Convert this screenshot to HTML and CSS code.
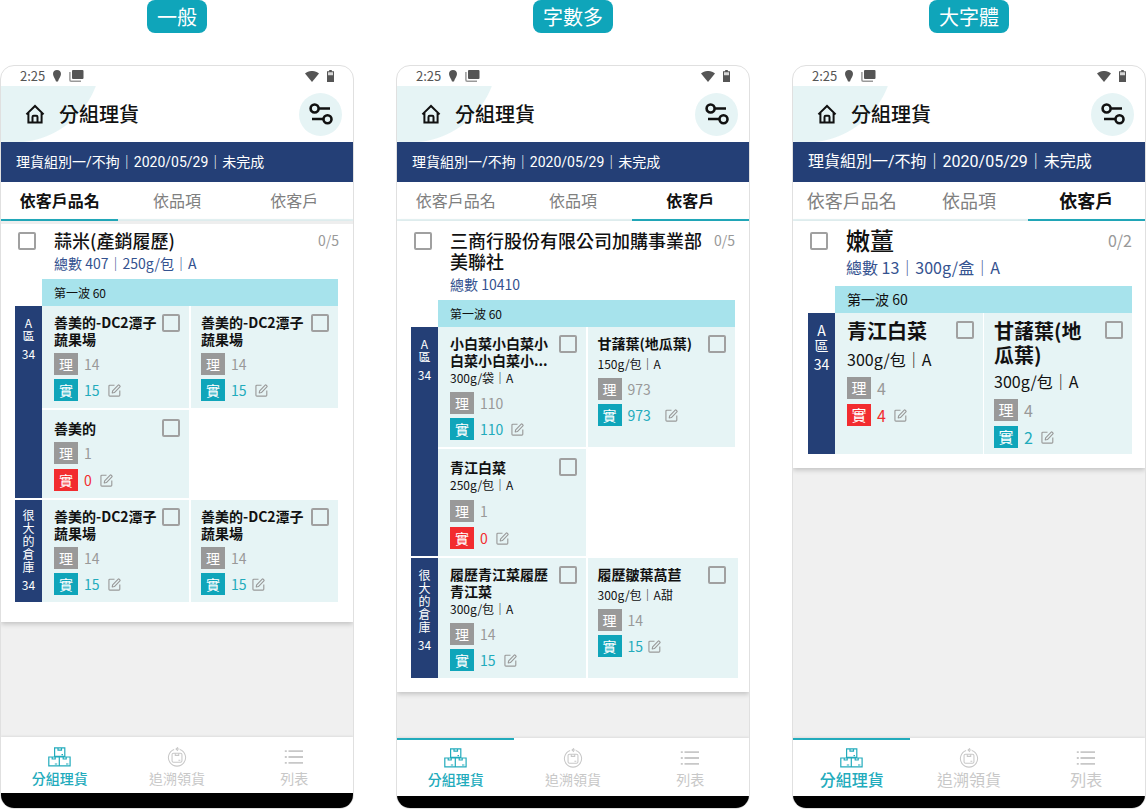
FILE: index.html
```html
<!DOCTYPE html>
<html lang="zh-Hant">
<head>
<meta charset="utf-8">
<meta name="viewport" content="width=device-width, initial-scale=1">
<title>分組理貨</title>
<link rel="stylesheet" href="styles.css">
</head>
<body>
<svg class="sprite" aria-hidden="true">
  <symbol id="i-pin" viewBox="0 0 8 12"><path d="M4 0C1.700 0 0 1.700 0 3.900 0 6.500 2.400 8.500 3 11.600h2C5.600 8.500 8 6.500 8 3.900 8 1.700 6.300 0 4 0z" fill="currentColor"/></symbol>
  <symbol id="i-cards" viewBox="0 0 15 12"><rect x="3" y="0" width="11.500" height="9" rx="1" fill="currentColor"/><path d="M.9 2v8q0 1.200 1.200 1.200H12" fill="none" stroke="#999" stroke-width="1.500"/></symbol>
  <symbol id="i-wifi" viewBox="0 0 14 11"><path d="M0 2.600C4-.9 10-.9 14 2.600L7 11z" fill="currentColor"/></symbol>
  <symbol id="i-battery" viewBox="0 0 7 12"><path d="M2.200 0h2.600v1.200H7V12H0V1.200h2.200z" fill="currentColor"/><path d="M1 2.200h5v3H1z" fill="#d8d8d8"/></symbol>
  <symbol id="i-home" viewBox="0 0 20 20"><path d="M1.400 10.400 10 2l8.600 8.400M3.400 8.800v9.700h13.200V8.800M7.500 18.300v-5.400q0-1.200 1.200-1.200h2.600q1.200 0 1.200 1.200v5.400" fill="none" stroke="currentColor" stroke-width="2"/></symbol>
  <symbol id="i-filter" viewBox="0 0 24 22"><g fill="none" stroke="currentColor" stroke-width="2.600"><circle cx="5.600" cy="5.500" r="4"/><path d="M9.600 5.500H21M3 16h11.500"/><circle cx="18.500" cy="16.200" r="4"/></g></symbol>
  <symbol id="i-edit" viewBox="0 0 14 14"><g fill="none" stroke="currentColor" stroke-width="1.200" stroke-linejoin="round"><path d="M7 1.300H2Q1 1.300 1 2.300V12q0 1 1 1h9.700q1 0 1-1V7"/><path d="M4.500 9.700 5 7.300 11 1.200q.5-.5 1 0l.8.8q.5.500 0 1L6.900 9.200z"/></g></symbol>
  <symbol id="i-boxes" viewBox="0 0 23 20"><g fill="none" stroke="currentColor" stroke-width="1.200"><path d="M6.600.9h10.200v8.500H6.600zM.8 10h10.500v8.800H.8zM11.300 10h10.800v8.800H11.300z"/><path d="M10 .9v2.300h3.500V.9M4.200 10v2h3v-2M15.200 10v2h3v-2M6.800 17h2.400M18 17h2.400M13.500 7.600H15"/></g></symbol>
  <symbol id="i-trace" viewBox="0 0 20 21"><g fill="none" stroke="currentColor" stroke-width="1.100"><path d="M7 2.600A9 9 0 1 0 13 2.600"/><path d="M9 2.200h3.500M11 .3 9 2.200l2 1.900"/><rect x="4.800" y="6.500" width="10.400" height="9.500" rx="1.500"/><path d="M8.200 6.500v2.300h3.600V6.500M11.500 14h2"/></g></symbol>
  <symbol id="i-list" viewBox="0 0 20 16"><path d="M4.500 2.200H19M4.500 8H19M4.500 13.800H19M.8 2.200h2M.8 8h2M.8 13.800h2" fill="none" stroke="currentColor" stroke-width="1.800"/></symbol>
</svg>

<main class="board">

  <section class="variant">
    <h2 class="tag">一般</h2>
    <div class="phone">
      <div class="status"><span>2:25</span><svg class="s-pin"><use href="#i-pin"/></svg><svg class="s-cards"><use href="#i-cards"/></svg><svg class="s-wifi"><use href="#i-wifi"/></svg><svg class="s-battery"><use href="#i-battery"/></svg></div>
      <header class="appbar">
        <button class="home" aria-label="首頁"><svg><use href="#i-home"/></svg></button>
        <h1 class="appbar-title">分組理貨</h1>
        <button class="filter" aria-label="篩選"><svg><use href="#i-filter"/></svg></button>
      </header>
      <p class="info">理貨組別一/不拘｜2020/05/29｜未完成</p>
      <div class="tabs" role="tablist">
        <button class="tab is-active" role="tab" aria-selected="true">依客戶品名</button>
        <button class="tab" role="tab">依品項</button>
        <button class="tab" role="tab">依客戶</button>
      </div>
      <div class="content">
        <article class="card card--first">
          <div class="card-head">
            <input type="checkbox" class="check" aria-label="蒜米(產銷履歷)">
            <div class="card-text"><h3 class="card-title">蒜米(產銷履歷)</h3><p class="card-sub">總數 407｜250g/包｜A</p></div>
            <span class="count">0/5</span>
          </div>
          <p class="wave">第一波 60</p>
          <div class="zones">
            <div class="zone">
              <div class="zone-label"><span class="zone-name">A區</span><span>34</span></div>
              <div class="cells">
                <div class="cell">
                  <div class="cell-head"><h4 class="name">善美的-DC2潭子蔬果場</h4><input type="checkbox" class="check" aria-label="善美的-DC2潭子蔬果場"></div>
                  <div class="metrics">
                    <div class="metric"><span class="badge">理</span><span>14</span></div>
                    <div class="metric metric--ok"><span class="badge">實</span><span>15</span><button class="edit" aria-label="編輯"><svg><use href="#i-edit"/></svg></button></div>
                  </div>
                </div>
                <div class="cell">
                  <div class="cell-head"><h4 class="name">善美的-DC2潭子蔬果場</h4><input type="checkbox" class="check" aria-label="善美的-DC2潭子蔬果場"></div>
                  <div class="metrics">
                    <div class="metric"><span class="badge">理</span><span>14</span></div>
                    <div class="metric metric--ok"><span class="badge">實</span><span>15</span><button class="edit" aria-label="編輯"><svg><use href="#i-edit"/></svg></button></div>
                  </div>
                </div>
                <div class="cell cell--short">
                  <div class="cell-head"><h4 class="name">善美的</h4><input type="checkbox" class="check" aria-label="善美的"></div>
                  <div class="metrics">
                    <div class="metric"><span class="badge">理</span><span>1</span></div>
                    <div class="metric metric--bad"><span class="badge">實</span><span>0</span><button class="edit" aria-label="編輯"><svg><use href="#i-edit"/></svg></button></div>
                  </div>
                </div>
              </div>
            </div>
            <div class="zone">
              <div class="zone-label zone-label--high"><span class="zone-name">很大的倉庫</span><span>34</span></div>
              <div class="cells">
                <div class="cell">
                  <div class="cell-head"><h4 class="name">善美的-DC2潭子蔬果場</h4><input type="checkbox" class="check" aria-label="善美的-DC2潭子蔬果場"></div>
                  <div class="metrics">
                    <div class="metric"><span class="badge">理</span><span>14</span></div>
                    <div class="metric metric--ok"><span class="badge">實</span><span>15</span><button class="edit" aria-label="編輯"><svg><use href="#i-edit"/></svg></button></div>
                  </div>
                </div>
                <div class="cell">
                  <div class="cell-head"><h4 class="name">善美的-DC2潭子蔬果場</h4><input type="checkbox" class="check" aria-label="善美的-DC2潭子蔬果場"></div>
                  <div class="metrics">
                    <div class="metric"><span class="badge">理</span><span>14</span></div>
                    <div class="metric metric--ok"><span class="badge">實</span><span>15</span><button class="edit edit--near" aria-label="編輯"><svg><use href="#i-edit"/></svg></button></div>
                  </div>
                </div>
              </div>
            </div>
          </div>
        </article>
      </div>
      <nav class="nav">
        <button class="nav-item is-current"><svg class="n-boxes"><use href="#i-boxes"/></svg>分組理貨</button>
        <button class="nav-item"><svg class="n-trace"><use href="#i-trace"/></svg>追溯領貨</button>
        <button class="nav-item"><svg class="n-list"><use href="#i-list"/></svg>列表</button>
      </nav>
      <div class="system"></div>
    </div>
  </section>

  <section class="variant variant--long">
    <h2 class="tag">字數多</h2>
    <div class="phone">
      <div class="status"><span>2:25</span><svg class="s-pin"><use href="#i-pin"/></svg><svg class="s-cards"><use href="#i-cards"/></svg><svg class="s-wifi"><use href="#i-wifi"/></svg><svg class="s-battery"><use href="#i-battery"/></svg></div>
      <header class="appbar">
        <button class="home" aria-label="首頁"><svg><use href="#i-home"/></svg></button>
        <h1 class="appbar-title">分組理貨</h1>
        <button class="filter" aria-label="篩選"><svg><use href="#i-filter"/></svg></button>
      </header>
      <p class="info">理貨組別一/不拘｜2020/05/29｜未完成</p>
      <div class="tabs" role="tablist">
        <button class="tab" role="tab">依客戶品名</button>
        <button class="tab" role="tab">依品項</button>
        <button class="tab is-active" role="tab" aria-selected="true">依客戶</button>
      </div>
      <div class="content">
        <article class="card">
          <div class="card-head">
            <input type="checkbox" class="check" aria-label="三商行股份有限公司加購事業部美聯社">
            <div class="card-text"><h3 class="card-title">三商行股份有限公司加購事業部美聯社</h3><p class="card-sub">總數 10410</p></div>
            <span class="count">0/5</span>
          </div>
          <p class="wave">第一波 60</p>
          <div class="zones">
            <div class="zone">
              <div class="zone-label"><span class="zone-name">A區</span><span>34</span></div>
              <div class="cells">
                <div class="cell">
                  <div class="cell-head"><h4 class="name">小白菜小白菜小白菜小白菜小...</h4><input type="checkbox" class="check" aria-label="小白菜"></div>
                  <p class="spec">300g/袋｜A</p>
                  <div class="metrics">
                    <div class="metric"><span class="badge">理</span><span>110</span></div>
                    <div class="metric metric--ok"><span class="badge">實</span><span>110</span><button class="edit" aria-label="編輯"><svg><use href="#i-edit"/></svg></button></div>
                  </div>
                </div>
                <div class="cell">
                  <div class="cell-head"><h4 class="name">甘藷葉(地瓜葉)</h4><input type="checkbox" class="check" aria-label="甘藷葉(地瓜葉)"></div>
                  <p class="spec spec--spaced">150g/包｜A</p>
                  <div class="metrics">
                    <div class="metric"><span class="badge">理</span><span>973</span></div>
                    <div class="metric metric--ok"><span class="badge">實</span><span>973</span><button class="edit edit--far" aria-label="編輯"><svg><use href="#i-edit"/></svg></button></div>
                  </div>
                </div>
                <div class="cell cell--short">
                  <div class="cell-head"><h4 class="name">青江白菜</h4><input type="checkbox" class="check" aria-label="青江白菜"></div>
                  <p class="spec">250g/包｜A</p>
                  <div class="metrics">
                    <div class="metric"><span class="badge">理</span><span>1</span></div>
                    <div class="metric metric--bad"><span class="badge">實</span><span>0</span><button class="edit" aria-label="編輯"><svg><use href="#i-edit"/></svg></button></div>
                  </div>
                </div>
              </div>
            </div>
            <div class="zone">
              <div class="zone-label"><span class="zone-name">很大的倉庫</span><span>34</span></div>
              <div class="cells">
                <div class="cell">
                  <div class="cell-head"><h4 class="name">履歷青江菜履歷青江菜</h4><input type="checkbox" class="check" aria-label="履歷青江菜履歷青江菜"></div>
                  <p class="spec">300g/包｜A</p>
                  <div class="metrics">
                    <div class="metric"><span class="badge">理</span><span>14</span></div>
                    <div class="metric metric--ok"><span class="badge">實</span><span>15</span><button class="edit" aria-label="編輯"><svg><use href="#i-edit"/></svg></button></div>
                  </div>
                </div>
                <div class="cell cell--bleed">
                  <div class="cell-head"><h4 class="name">履歷皺葉萵苣</h4><input type="checkbox" class="check" aria-label="履歷皺葉萵苣"></div>
                  <p class="spec spec--spaced">300g/包｜A甜</p>
                  <div class="metrics">
                    <div class="metric"><span class="badge">理</span><span>14</span></div>
                    <div class="metric metric--ok"><span class="badge">實</span><span>15</span><button class="edit edit--near" aria-label="編輯"><svg><use href="#i-edit"/></svg></button></div>
                  </div>
                </div>
              </div>
            </div>
          </div>
        </article>
      </div>
      <nav class="nav">
        <button class="nav-item is-current"><svg class="n-boxes"><use href="#i-boxes"/></svg>分組理貨</button>
        <button class="nav-item"><svg class="n-trace"><use href="#i-trace"/></svg>追溯領貨</button>
        <button class="nav-item"><svg class="n-list"><use href="#i-list"/></svg>列表</button>
      </nav>
      <div class="system"></div>
    </div>
  </section>

  <section class="variant variant--long variant--large">
    <h2 class="tag">大字體</h2>
    <div class="phone">
      <div class="status"><span>2:25</span><svg class="s-pin"><use href="#i-pin"/></svg><svg class="s-cards"><use href="#i-cards"/></svg><svg class="s-wifi"><use href="#i-wifi"/></svg><svg class="s-battery"><use href="#i-battery"/></svg></div>
      <header class="appbar">
        <button class="home" aria-label="首頁"><svg><use href="#i-home"/></svg></button>
        <h1 class="appbar-title">分組理貨</h1>
        <button class="filter" aria-label="篩選"><svg><use href="#i-filter"/></svg></button>
      </header>
      <p class="info">理貨組別一/不拘｜2020/05/29｜未完成</p>
      <div class="tabs" role="tablist">
        <button class="tab" role="tab">依客戶品名</button>
        <button class="tab" role="tab">依品項</button>
        <button class="tab is-active" role="tab" aria-selected="true">依客戶</button>
      </div>
      <div class="content">
        <article class="card">
          <div class="card-head">
            <input type="checkbox" class="check" aria-label="嫩薑">
            <div class="card-text"><h3 class="card-title">嫩薑</h3><p class="card-sub">總數 13｜300g/盒｜A</p></div>
            <span class="count">0/2</span>
          </div>
          <p class="wave">第一波 60</p>
          <div class="zones">
            <div class="zone">
              <div class="zone-label"><span class="zone-name">A區</span><span>34</span></div>
              <div class="cells">
                <div class="cell">
                  <div class="cell-head"><h4 class="name">青江白菜</h4><input type="checkbox" class="check" aria-label="青江白菜"></div>
                  <p class="spec spec--spaced">300g/包｜A</p>
                  <div class="metrics">
                    <div class="metric"><span class="badge">理</span><span>4</span></div>
                    <div class="metric metric--bad"><span class="badge">實</span><span>4</span><button class="edit" aria-label="編輯"><svg><use href="#i-edit"/></svg></button></div>
                  </div>
                </div>
                <div class="cell">
                  <div class="cell-head"><h4 class="name">甘藷葉(地瓜葉)</h4><input type="checkbox" class="check" aria-label="甘藷葉(地瓜葉)"></div>
                  <p class="spec">300g/包｜A</p>
                  <div class="metrics">
                    <div class="metric"><span class="badge">理</span><span>4</span></div>
                    <div class="metric metric--ok"><span class="badge">實</span><span>2</span><button class="edit" aria-label="編輯"><svg><use href="#i-edit"/></svg></button></div>
                  </div>
                </div>
              </div>
            </div>
          </div>
        </article>
      </div>
      <nav class="nav">
        <button class="nav-item is-current"><svg class="n-boxes"><use href="#i-boxes"/></svg>分組理貨</button>
        <button class="nav-item"><svg class="n-trace"><use href="#i-trace"/></svg>追溯領貨</button>
        <button class="nav-item"><svg class="n-list"><use href="#i-list"/></svg>列表</button>
      </nav>
      <div class="system"></div>
    </div>
  </section>

</main>
</body>
</html>
```

FILE: styles.css
```css
:root {
  --teal: #0fa5ba;
  --teal-line: #22abbc;
  --pale: #e6f4f5;
  --navy: #243f76;
  --grey: #999;
  --red: #f22c2f;
}

* { box-sizing: border-box; }

body, h1, h2, h3, h4, p { margin: 0; }

body {
  background: #fff;
  color: #111;
  font-family: "Noto Sans CJK TC", "Noto Sans", sans-serif;
  font-size: 14px;
}

button {
  margin: 0;
  padding: 0;
  border: 0;
  background: none;
  color: inherit;
  font: inherit;
}

svg { display: block; flex: none; }
.sprite { position: absolute; width: 0; height: 0; }

.board {
  display: grid;
  grid-template-columns: repeat(3, minmax(0, 1fr));
  gap: 42px;
  min-height: 100vh;
  padding-bottom: 1px;
}

.variant {
  display: flex;
  flex-direction: column;
  align-items: center;
  gap: 32px;

  --info: 14px;
  --tab: 16px;
  --title: 18px;
  --title-line: 21px;
  --sub-line: 24px;
  --body: 14px;
  --badge: 14px;
  --small: 12px;
  --zone-line: 13px;
  --zone-gap: 5px;
  --name: 14px;
  --name-line: 17px;
  --spec-line: 18px;
  --spec-space: 3px;
  --head-top: 9px;
  --cell-top: 8px;
  --cell-gap: 2px;
}

.variant--large {
  --info: 16px;
  --tab: 18px;
  --title: 24px;
  --title-line: 28px;
  --sub-line: 26px;
  --body: 16px;
  --badge: 15px;
  --small: 14px;
  --zone-line: 15px;
  --zone-gap: 4px;
  --name: 20px;
  --name-line: 24px;
  --spec-line: 22px;
  --spec-space: 5px;
  --head-top: 5px;
  --cell-top: 6px;
  --cell-gap: 1px;
}

.tag {
  padding: 0 10px;
  border-radius: 8px;
  background: var(--teal);
  color: #fff;
  font-size: 20px;
  font-weight: 400;
  line-height: 33px;
}

.phone {
  display: flex;
  flex: 1;
  flex-direction: column;
  align-self: stretch;
  overflow: hidden;
  border: 1px solid #e0e0e0;
  border-radius: 14px;
  background: #fff;
}

/* status bar */
.status {
  display: flex;
  align-items: center;
  height: 20px;
  padding: 0 19px;
  color: #555;
  font-size: 13px;
  line-height: 20px;
}
.s-pin { width: 8px; height: 12px; margin-left: 8px; }
.s-cards { width: 15px; height: 12px; margin-left: 8px; }
.s-wifi { width: 14px; height: 11px; margin-left: auto; }
.s-battery { width: 7px; height: 12px; margin-left: 8px; }

/* app bar */
.appbar {
  display: flex;
  align-items: center;
  height: 56px;
  padding: 0 11px 0 24px;
  background: radial-gradient(circle at 13px -31px, var(--pale) 87px, transparent 88px);
}
.home svg { width: 20px; height: 20px; }
.appbar-title {
  margin-left: 14px;
  font-size: 20px;
  font-weight: 500;
  line-height: 28px;
}
.filter {
  display: grid;
  place-items: center;
  width: 43px;
  height: 43px;
  margin-left: auto;
  border-radius: 50%;
  background: var(--pale);
}
.filter svg { width: 24px; height: 22px; }

.info {
  padding: 0 15px;
  background: var(--navy);
  color: #fff;
  font-family: Roboto, "Noto Sans CJK TC", sans-serif;
  font-size: var(--info);
  line-height: 40px;
  white-space: nowrap;
}

.tabs {
  display: grid;
  grid-template-columns: repeat(3, 1fr);
}
.tab {
  border-bottom: 2px solid var(--pale);
  color: #808080;
  font-size: var(--tab);
  line-height: 37px;
}
.tab.is-active {
  border-color: var(--teal-line);
  color: #111;
  font-weight: 700;
}

/* card */
.content { flex: 1; background: #f0f0f0; }
.card {
  padding: 0 14px 14px;
  background: #fff;
  box-shadow: 0 2px 5px rgba(0, 0, 0, .2);
}
.card--first { padding-right: 15px; padding-bottom: 20px; }
.card--first .card-head {
  margin: 0 -15px 0 -14px;
  padding: 6px 14px 4px 17px;
  border-top: 3px solid #eee;
}
.variant--large .card { padding-right: 13px; padding-left: 15px; }

.card-head {
  display: flex;
  align-items: flex-start;
  padding: var(--head-top) 0 4px 3px;
}
.card-head .check { margin-right: 18px; }
.variant--large .card-head { padding-bottom: 6px; padding-left: 2px; }
.variant--large .card-head .check { margin-top: 6px; }
.card-text { flex: 1; min-width: 0; }
.card-title {
  font-size: var(--title);
  font-weight: 500;
  line-height: var(--title-line);
}
.card-sub {
  color: #34528f;
  font-size: var(--body);
  line-height: var(--sub-line);
}
.count {
  margin-left: 8px;
  color: var(--grey);
  font-size: var(--body);
  line-height: var(--title-line);
}

.check {
  flex: none;
  width: 18px;
  height: 18px;
  margin: 2px 0 0;
  appearance: none;
  border: 2px solid #a0a0a0;
  border-radius: 2px;
}
.check:checked { background: var(--teal); }

.wave {
  margin-left: 27px;
  padding-left: 12px;
  background: #a7e3ec;
  font-size: var(--small);
  line-height: 27px;
}

.zones { display: grid; gap: 2px; }
.zone { display: flex; }
.zone-label {
  display: flex;
  flex: none;
  flex-direction: column;
  align-items: center;
  gap: var(--zone-gap);
  width: 27px;
  padding-top: 10px;
  background: var(--navy);
  color: #fff;
  font-size: var(--small);
  line-height: var(--zone-line);
}
.zone-label--high { padding-top: 8px; }
.zone-name {
  width: 1em;
  text-align: center;
  word-break: break-all;
}

.cells {
  display: grid;
  flex: 1;
  grid-template-columns: repeat(2, minmax(0, 1fr));
  gap: 2px var(--cell-gap);
}
.cell {
  padding: var(--cell-top) 9px 7px 12px;
  background: var(--pale);
}
.cell:nth-child(even) { padding-left: 10px; }
.cell--short { padding-top: 10px; }
.cell--bleed { margin-right: -3px; padding-right: 12px; }
.variant--large .cell { padding-bottom: 6px; }

.cell-head { display: flex; gap: 4px; }
.cell-head .check { margin: 0 0 -1px; }
.cell--short .check { margin: -1px 0 0; }
.variant--large .cell-head .check { margin-top: 2px; }

.name {
  flex: 1;
  font-size: var(--name);
  font-weight: 700;
  line-height: var(--name-line);
}
.spec {
  font-size: var(--small);
  line-height: var(--spec-line);
}
.spec--spaced { margin-top: var(--spec-space); }
.variant--large .spec { margin-top: 3px; font-size: 16px; }
.variant--large .spec--spaced { margin-top: var(--spec-space); }

.metrics { display: grid; gap: 4px; margin-top: 5px; }
.cell--short .metrics { gap: 5px; }
.cell--short .spec + .metrics { margin-top: 6px; }
.variant--large .metrics { gap: 5px; margin-top: 7px; }

.metric {
  display: flex;
  align-items: center;
  height: 22px;
  color: var(--grey);
  font-size: var(--body);
  line-height: 22px;
}
.badge {
  width: 24px;
  margin-right: 6px;
  background: var(--grey);
  color: #fff;
  font-size: var(--badge);
  text-align: center;
}
.metric--ok { color: var(--teal-line); }
.metric--ok .badge { background: var(--teal); }
.metric--bad { color: var(--red); }
.metric--bad .badge { background: var(--red); }
.edit { margin-left: 8px; color: var(--grey); }
.edit--near { margin-left: 5px; }
.edit--far { margin-left: 14px; }
.edit svg { width: 13px; height: 13px; }

/* bottom navigation */
.nav {
  display: grid;
  grid-template-columns: repeat(3, 1fr);
  background: #fff;
  box-shadow: 0 -1px 2px rgba(0, 0, 0, .08);
}
.nav-item {
  display: flex;
  flex-direction: column;
  align-items: center;
  padding: 10px 0 4px;
  color: #c8c8c8;
  font-size: var(--body);
  line-height: 22px;
}
.nav-item.is-current { color: var(--teal-line); font-weight: 500; }
.nav-item svg { height: 20px; }
.n-boxes { width: 23px; }
.n-trace { width: 20px; }
.n-list { width: 20px; }
.variant--long .nav-item { padding-top: 8px; padding-bottom: 6px; border-top: 2px solid transparent; }
.variant--long .nav-item.is-current { border-color: var(--teal-line); }

.system { height: 15px; background: #000; }
.variant--long .system { height: 12px; }
```
